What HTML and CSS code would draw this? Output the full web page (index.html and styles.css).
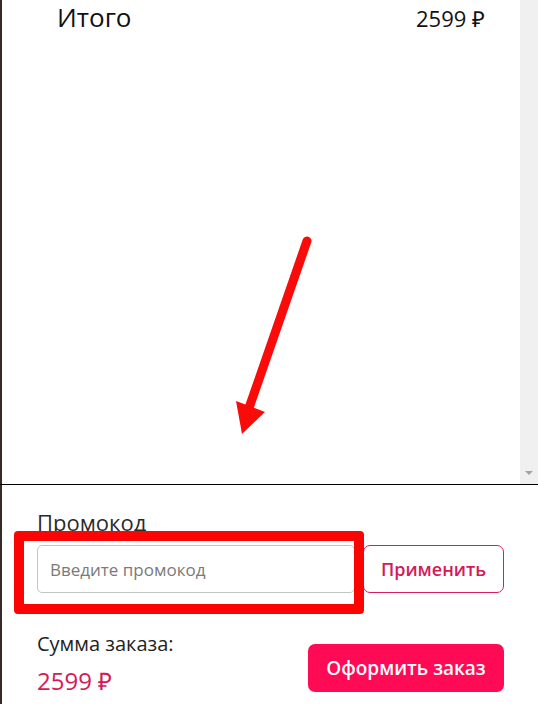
FILE: index.html
```html
<!DOCTYPE html>
<html lang="ru">
<head>
<meta charset="utf-8">
<title>Корзина</title>
<link rel="stylesheet" href="styles.css">
</head>
<body>
<div class="frame">
  <div class="scroller">
    <div class="content">
      <div class="total-row">
        <span class="total-label">Итого</span>
        <span class="total-price">2599 ₽</span>
      </div>
    </div>
    <div class="scrollbar">
      <span class="scroll-arrow"></span>
    </div>
  </div>
  <div class="divider"></div>
  <div class="panel">
    <div class="promo-label">Промокод</div>
    <div class="promo-row">
      <input class="promo-input" type="text" placeholder="Введите промокод">
      <button class="btn-apply" type="button">Применить</button>
    </div>
    <div class="summary">
      <div class="sum-info">
        <div class="sum-label">Сумма заказа:</div>
        <div class="sum-price">2599 ₽</div>
      </div>
      <button class="btn-order" type="button">Оформить заказ</button>
    </div>
  </div>
</div>
<svg class="annot-arrow" width="538" height="704" viewBox="0 0 538 704">
  <line x1="307" y1="241" x2="249" y2="408" stroke="#fb0a0a" stroke-width="9" stroke-linecap="round"/>
  <polygon points="236,401 265,412 242,434" fill="#fb0a0a"/>
</svg>
<div class="annot-box"></div>
</body>
</html>
```

FILE: styles.css
```css
* { box-sizing: border-box; }

html, body {
  margin: 0;
  padding: 0;
  width: 538px;
  height: 704px;
  overflow: hidden;
  background: #fff;
  font-family: "Open Sans", Lato, "Liberation Sans", sans-serif;
}

.frame {
  position: relative;
  height: 704px;
  border-left: 2px solid #3a2a27;
  display: flex;
  flex-direction: column;
}

.scroller {
  height: 484px;
  display: flex;
}

.content {
  flex: 1;
}

.total-row {
  display: flex;
  justify-content: space-between;
  align-items: baseline;
  padding: 0 35px 0 55px;
  color: #111;
}

.total-label {
  font-size: 26px;
  line-height: 34px;
}

.total-price {
  font-size: 22px;
}

.scrollbar {
  width: 18px;
  background: #f0f0f0;
  display: flex;
  flex-direction: column;
  justify-content: flex-end;
  align-items: center;
  padding-bottom: 9px;
}

.scroll-arrow {
  width: 0;
  height: 0;
  border-left: 4px solid transparent;
  border-right: 4px solid transparent;
  border-top: 4px solid #a3a3a3;
}

.divider {
  height: 1px;
  background: #000;
  margin-left: -2px;
}

.panel {
  flex: 1;
  padding: 23px 34px 0 35px;
  display: flex;
  flex-direction: column;
}

.promo-label {
  font-size: 22px;
  line-height: 28px;
  color: #2b2b2b;
}

.promo-row {
  display: flex;
  gap: 8px;
  margin-top: 9px;
}

.promo-input {
  width: 318px;
  height: 48px;
  border: 1.5px solid #c4c4c4;
  border-radius: 5px;
  padding: 0 12px;
  font-family: inherit;
  font-size: 17px;
  color: #333;
  outline: none;
}

.promo-input::placeholder {
  color: #7a7a7a;
}

.btn-apply {
  flex: 1;
  height: 48px;
  border: 1.5px solid #d91e5b;
  border-radius: 7px;
  background: #fff;
  color: #d41a57;
  font-family: inherit;
  font-size: 18px;
  font-weight: 600;
  padding: 0;
}

.summary {
  display: flex;
  justify-content: space-between;
  align-items: flex-end;
  margin-top: 39px;
}

.sum-label {
  font-size: 20px;
  line-height: 24px;
  color: #222;
}

.sum-price {
  margin-top: 10px;
  font-size: 24px;
  line-height: 30px;
  color: #d41a57;
}

.btn-order {
  width: 196px;
  height: 48px;
  margin-bottom: 4px;
  border: none;
  border-radius: 7px;
  background: #ff0a55;
  color: #fff;
  font-family: inherit;
  font-size: 19px;
  font-weight: 600;
  padding: 0;
}

.annot-arrow {
  position: absolute;
  left: 0;
  top: 0;
  pointer-events: none;
}

.annot-box {
  position: absolute;
  left: 14px;
  top: 531px;
  width: 350px;
  height: 83px;
  border: 10px solid #fb0404;
  border-radius: 4px;
  pointer-events: none;
}
```
